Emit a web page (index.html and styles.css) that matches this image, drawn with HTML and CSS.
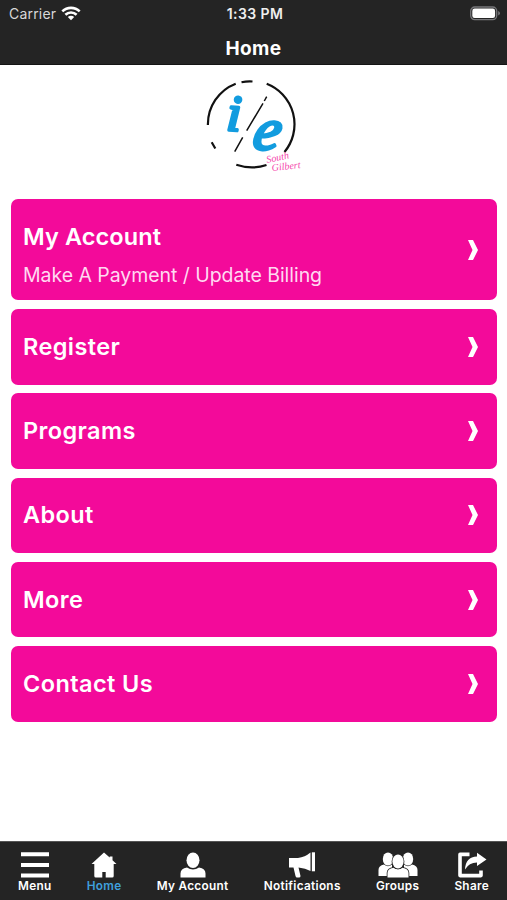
FILE: index.html
```
<!DOCTYPE html>
<html lang="en">
<head>
	<meta charset="utf-8">
	<meta name="viewport" content="width=device-width, initial-scale=1">
	<title>Home</title>
	<link rel="stylesheet" href="styles.css">
</head>
<body>
	<header>
		<div class="status">
			<div class="carrier">
				<span>Carrier</span>
				<svg width="20" height="16" viewBox="0 0 20 16" fill="none" stroke="#fff" stroke-width="2.6">
					<path d="M1.3 5.4C6.2.7 13.8.7 18.700 5.400M4.400 8.800C7.600 5.700 12.400 5.700 15.600 8.800"/>
					<path d="M10 14.300L6.800 11C8.600 9.400 11.400 9.400 13.200 11Z" fill="#fff" stroke="none"/>
				</svg>
			</div>
			<div class="time">1:33 PM</div>
			<div class="battery">
				<svg width="32" height="16" viewBox="0 0 32 16">
					<rect x="1.700" y="1" width="26" height="12.600" rx="4" fill="none" stroke="#77777a" stroke-width="1.300"/>
					<rect x="3.300" y="2.600" width="22.800" height="9.400" rx="2.300" fill="#fff"/>
					<path d="M29.200 5.100Q31 5.800 31 7.300T29.200 9.500Z" fill="#77777a"/>
				</svg>
			</div>
		</div>
		<h1>Home</h1>
	</header>

	<main>
		<svg class="logo" width="120" height="110" viewBox="0 0 120 110">
			<!-- broken ring -->
			<g fill="none" stroke="#111" stroke-width="2.2">
				<path d="M12.900 55A43.500 43.500 0 0 1 40.700 13.700M46.500 12.300Q52 11.100 57.500 11.500M71.700 13.700A43.500 43.500 0 0 1 89.500 82M71.500 95Q57 100 41.300 94.800M16.700 72.300L20.300 78.500"/>
				<path stroke-width="1.500" d="M71.700 26.700L69.300 31M68 33.300L51.700 60.700M47.700 67.300L39.700 81.700"/>
			</g>
			<text class="letter" font-size="51" transform="translate(31 60) rotate(4)">i</text>
			<text class="letter" font-size="60" transform="translate(56 78.500) rotate(4) skewX(-8)">e</text>
			<g class="script">
				<text transform="translate(72 93) rotate(-12)">South</text>
				<text transform="translate(77 101) rotate(-6)">Gilbert</text>
			</g>
		</svg>

		<div class="list">
			<a class="card big">
				<div>
					<h2>My Account</h2>
					<p>Make A Payment / Update Billing</p>
				</div>
				<svg class="arrow" viewBox="0 0 10 20"><path d="M0 0H5L10 10L5 20H0L4.500 10Z"/></svg>
			</a>
			<a class="card">
				<h2>Register</h2>
				<svg class="arrow" viewBox="0 0 10 20"><path d="M0 0H5L10 10L5 20H0L4.500 10Z"/></svg>
			</a>
			<a class="card">
				<h2>Programs</h2>
				<svg class="arrow" viewBox="0 0 10 20"><path d="M0 0H5L10 10L5 20H0L4.500 10Z"/></svg>
			</a>
			<a class="card">
				<h2>About</h2>
				<svg class="arrow" viewBox="0 0 10 20"><path d="M0 0H5L10 10L5 20H0L4.500 10Z"/></svg>
			</a>
			<a class="card">
				<h2>More</h2>
				<svg class="arrow" viewBox="0 0 10 20"><path d="M0 0H5L10 10L5 20H0L4.500 10Z"/></svg>
			</a>
			<a class="card">
				<h2>Contact Us</h2>
				<svg class="arrow" viewBox="0 0 10 20"><path d="M0 0H5L10 10L5 20H0L4.500 10Z"/></svg>
			</a>
		</div>
	</main>

	<nav>
		<a>
			<svg width="30" height="26" viewBox="0 0 30 26">
				<path d="M1 .3H29V4.300H1ZM1 11H29V15H1ZM1 21.600H29V25.600H1Z"/>
			</svg>
			<span>Menu</span>
		</a>
		<a class="active">
			<svg width="26" height="26" viewBox="0 0 26 26">
				<path d="M13 .5L18.700 5.500V4.500H21.500V8.200L25.500 12H22.700V24Q22.700 25.500 21.200 25.500H14.700V20H11.300V25.500H4.800Q3.300 25.500 3.300 24V12H.5Z"/>
			</svg>
			<span>Home</span>
		</a>
		<a>
			<svg width="26" height="26" viewBox="0 0 26 26">
				<ellipse cx="13" cy="8.200" rx="6.500" ry="7.800"/>
				<path d="M.5 25.500V21.500Q.5 16.500 7 15.400Q13 19.500 19 15.400Q25.500 16.500 25.500 21.500V25.500Z"/>
			</svg>
			<span>My Account</span>
		</a>
		<a>
			<svg width="28" height="26" viewBox="0 0 28 26">
				<path d="M1 6H10Q17 5 22.500.5V19Q17.500 16 10.500 15.500L12.500 24Q12.500 25.500 11 25.500H9Q8 25.500 7.500 24L5.500 15.500H1Z"/>
				<path d="M23.300.3H27V19.300H23.300Z"/>
				<path d="M23.500 0V20" fill="none" stroke="#242424" stroke-width=".8"/>
			</svg>
			<span>Notifications</span>
		</a>
		<a>
			<svg width="40" height="26" viewBox="0 0 40 26">
				<ellipse cx="10" cy="7" rx="5.200" ry="6.600"/>
				<ellipse cx="30" cy="7" rx="5.200" ry="6.600"/>
				<path d="M.5 24V18Q.5 13.500 6 12.500Q10 16 14 12.500V24ZM39.500 24V18Q39.500 13.500 34 12.500Q30 16 26 12.500V24Z"/>
				<g stroke="#242424" stroke-width="1.600" paint-order="stroke">
					<path d="M9.500 25.500V21Q9.500 16.500 15.500 15.700Q20 19 24.500 15.700Q30.500 16.500 30.500 21V25.500Z"/>
					<ellipse cx="20" cy="9.500" rx="5.600" ry="6.900"/>
				</g>
			</svg>
			<span>Groups</span>
		</a>
		<a>
			<svg width="30" height="26" viewBox="0 0 30 26">
				<path d="M12.500 2.400H3V23.600H24V18.500" fill="none" stroke="#fff" stroke-width="3.600" stroke-linejoin="round"/>
				<path d="M20 .8L29.500 7.500L20 14V10.500Q12 10.500 8 17.500Q8.500 5 20 4.500Z"/>
			</svg>
			<span>Share</span>
		</a>
	</nav>
</body>
</html>
```
FILE: styles.css
```
* {
	box-sizing: border-box;
}
body {
	margin: 0;
	height: 900px;
	display: flex;
	flex-direction: column;
	background: #fff;
	font-family: Inter, "Liberation Sans", sans-serif;
	color: #fff;
}
header {
	height: 64.5px;
	background: #242424;
	border-bottom: 1px solid #141414;
}
.status {
	display: grid;
	grid-template-columns: 1fr auto 1fr;
	align-items: center;
	height: 27px;
	padding: 0 6px 0 9px;
	font-size: 14px;
}
.carrier {
	display: flex;
	align-items: center;
	gap: 5px;
	color: #d8d8d8;
	letter-spacing: .2px;
}
.time {
	font-size: 14px;
	font-weight: 600;
	letter-spacing: .4px;
	color: #eee;
}
.battery {
	display: flex;
	justify-content: flex-end;
}
h1 {
	margin: 9px 0 0;
	font-size: 19px;
	line-height: 26px;
	font-weight: 700;
	letter-spacing: .4px;
	text-align: center;
}
h2, p {
	margin: 0;
}
main {
	flex: 1;
}
.logo {
	display: block;
	margin: 5.5px auto 19px 195px;
}
.letter {
	font-family: "Liberation Serif", serif;
	font-style: italic;
	fill: #129cdf;
	stroke: #129cdf;
	stroke-width: 3.2;
	stroke-linejoin: round;
}
.script {
	font-family: "Liberation Serif", serif;
	font-size: 10px;
	font-style: italic;
	fill: #f545ac;
}
.list {
	display: flex;
	flex-direction: column;
	gap: 8.700px;
	padding: 0 10px 0 11px;
}
.card {
	display: flex;
	align-items: center;
	justify-content: space-between;
	height: 75.600px;
	padding: 0 19px 0 12px;
	border-radius: 7px;
	background: #f30a9a;
}
.card.big {
	height: 101.300px;
}
.card.big div {
	margin-top: 10px;
}
.card h2 {
	font-size: 23.500px;
	line-height: 30px;
	font-weight: 600;
	letter-spacing: .4px;
}
.card.big h2 {
	letter-spacing: .1px;
}
.card p {
	margin-top: 11px;
	font-size: 19.500px;
	line-height: 24px;
	letter-spacing: -.050px;
	color: #ffd9f1;
}
.arrow {
	width: 10px;
	height: 20px;
	fill: #fff;
}
nav {
	display: flex;
	justify-content: space-between;
	height: 59px;
	padding: 10px 18px 0;
	background: #242424;
	border-top: 1px solid #555;
}
nav a {
	display: flex;
	flex-direction: column;
	align-items: center;
}
nav svg {
	fill: #fff;
	margin: 0 -4px;
}
nav span {
	margin-top: 1px;
	font-size: 11.800px;
	line-height: 15px;
	font-weight: 600;
	letter-spacing: .3px;
}
.active span {
	color: #3f9fdc;
}
```
